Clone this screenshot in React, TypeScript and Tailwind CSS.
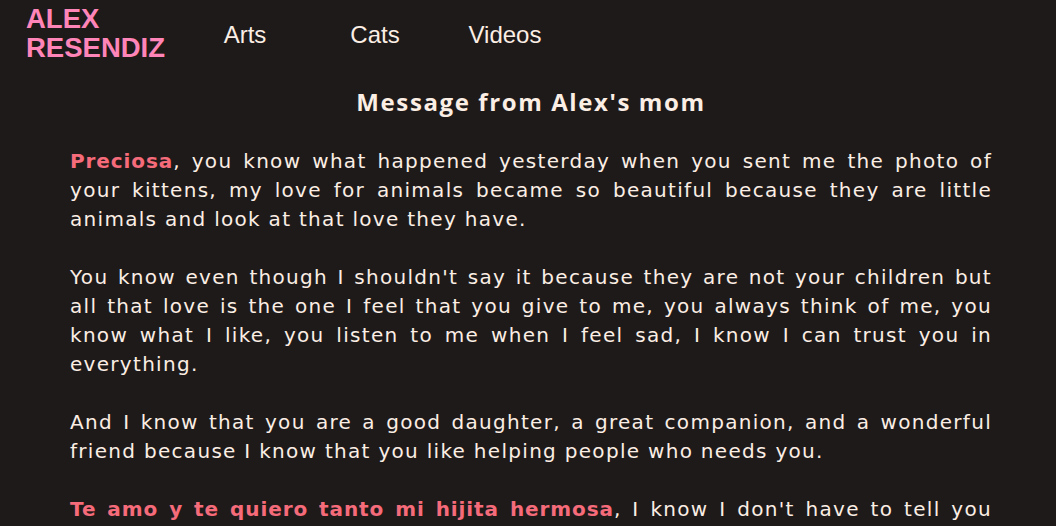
import React from "react";

const J = "block [text-align:justify] [text-align-last:justify] whitespace-nowrap";
const L = "block whitespace-nowrap";
const B = "text-[#f56b7a] font-bold tracking-[0.9px]";

export default function App() {
  return (
    <div className="min-h-[526px] w-full bg-[#1e1a1a] text-[#fbeee4] overflow-hidden">
      <header className="flex items-center pl-[26px] pt-[0px] h-[66px]">
        <div className="font-['Liberation_Sans',Arial,sans-serif] font-bold text-[27.5px] leading-[29px] text-[#ff85b8] w-[154px]">
          <div>ALEX</div>
          <div>RESENDIZ</div>
        </div>
        <nav className="flex font-['Liberation_Sans',Arial,sans-serif] text-[24px] text-[#fbeee4] mt-[4px]">
          <a className="w-[130px] text-center">Arts</a>
          <a className="w-[130px] text-center">Cats</a>
          <a className="w-[130px] text-center">Videos</a>
        </nav>
      </header>
      <main className="ml-[70px] w-[922px] font-['DejaVu_Sans','Open_Sans',sans-serif] text-[20px] leading-[29px] tracking-[1.3px]">
        <h1 className="text-center font-bold font-['Open_Sans',sans-serif] text-[24px] leading-[30px] mt-[21px] mb-[30px] tracking-[1.6px]">Message from Alex's mom</h1>
        <p className="mb-[29px]">
          <span className={J}><b className={B}>Preciosa</b>, you know what happened yesterday when you sent me the photo of</span>
          <span className={J}>your kittens, my love for animals became so beautiful because they are little</span>
          <span className={L}>animals and look at that love they have.</span>
        </p>
        <p className="mb-[29px]">
          <span className={J}>You know even though I shouldn't say it because they are not your children but</span>
          <span className={J}>all that love is the one I feel that you give to me, you always think of me, you</span>
          <span className={J}>know what I like, you listen to me when I feel sad, I know I can trust you in</span>
          <span className={L}>everything.</span>
        </p>
        <p className="mb-[29px]">
          <span className={J}>And I know that you are a good daughter, a great companion, and a wonderful</span>
          <span className={L}>friend because I know that you like helping people who needs you.</span>
        </p>
        <p>
          <span className={J}><b className={B}>Te amo y te quiero tanto mi hijita hermosa</b>, I know I don't have to tell you</span>
        </p>
      </main>
    </div>
  );
}
